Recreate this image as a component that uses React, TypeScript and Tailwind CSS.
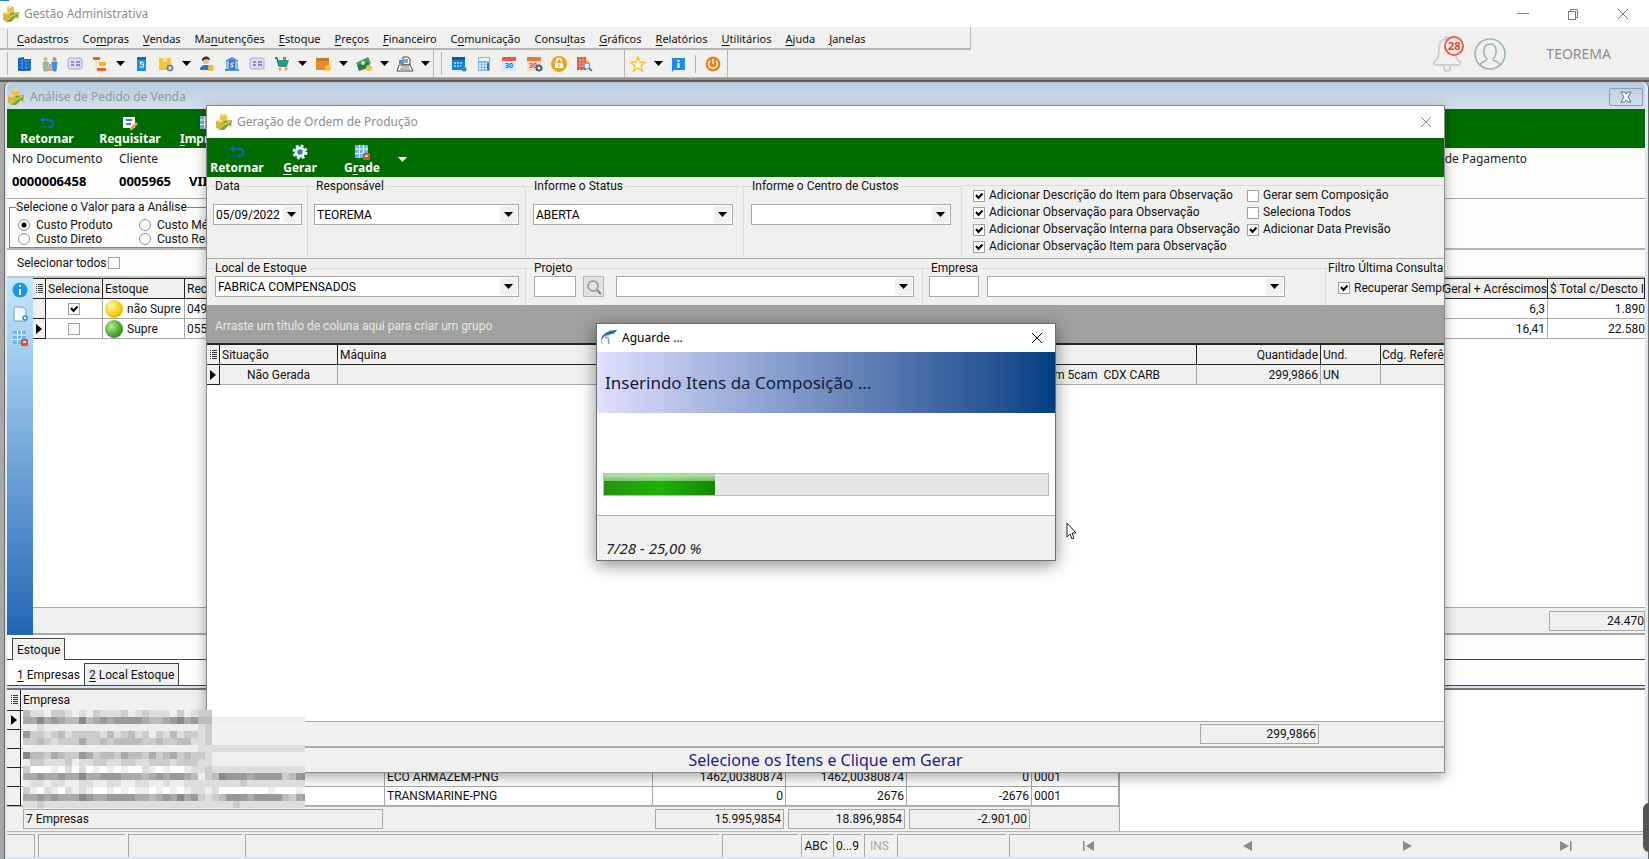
import { useId, type ReactNode } from "react"

const SANS = "font-[Roboto,Arial,sans-serif]"
const UI = "font-['Noto_Sans','Open_Sans',sans-serif]"

interface MnemonicProps {
  text: string
  at: number
}

// Menu caption with its underlined access key
function Mnemonic({ text, at }: MnemonicProps) {
  if (at < 0) return <span>{text}</span>
  return (
    <span className="whitespace-pre">
      {text.slice(0, at)}
      <u className="underline-offset-2">{text[at]}</u>
      {text.slice(at + 1)}
    </span>
  )
}

function AppIcon() {
  return (
    <svg viewBox="0 0 18 18" className="w-[18px] h-[18px] shrink-0">
      <path d="M5 2l4-1 3 1v6l-4 2-3-1z" fill="#e8c34c" />
      <path d="M5 2l4-1 3 1-4 1z" fill="#f8e69a" />
      <path d="M1 8l4-1 4 1v6l-4 2-4-1z" fill="#dfb53c" />
      <path d="M1 8l4-1 4 1-4 1z" fill="#f8e69a" />
      <path d="M3 16l6-6-1-2 9-1-1 7-2-2-5 5-4 0z" fill="#7fa62b" />
      <path d="M4 16l6-5 6-3" stroke="#b8d45c" strokeWidth="1.500" fill="none" />
    </svg>
  )
}

function CloseGlyph({ className = "" }: { className?: string }) {
  return (
    <svg viewBox="0 0 12 12" className={`w-3 h-3 ${className}`} stroke="currentColor" fill="none">
      <path d="M1 1l10 10M11 1L1 11" />
    </svg>
  )
}

function Caret({ className = "" }: { className?: string }) {
  return (
    <svg viewBox="0 0 9 5" className={`w-[9px] h-[5px] ${className}`} fill="currentColor">
      <path d="M0 0h9L4.500 5z" />
    </svg>
  )
}

const ICONS: Record<string, ReactNode> = {
  building: (
    <>
      <path d="M1 2l6-1v2h7v11l-1 1H1z" fill="#1565b8" />
      <path d="M2 5h12M2 8h12M2 11h12M5 3v11M9 4v10" stroke="#3f9cf0" strokeWidth="0.800" />
    </>
  ),
  people: (
    <>
      <circle cx="3.500" cy="3" r="2" fill="#e9b08a" />
      <circle cx="12.500" cy="3" r="2" fill="#c98a5c" />
      <path d="M1 6h5v9H2zM6 7l3 3" fill="#8fb8a4" stroke="#8fb8a4" />
      <path d="M10 6h5l-1 9h-3zM10 8L7 10" fill="#3f8fd6" stroke="#3f8fd6" />
      <rect x="5" y="10" width="5" height="5" fill="#e8a27c" />
    </>
  ),
  card: (
    <>
      <rect x="1" y="2" width="14" height="11" rx="2" fill="#dcdcf6" stroke="#a8a8dc" />
      <path d="M4 6h3M4 9h3M9 6h4M9 9h4" stroke="#6c6cc0" strokeWidth="1.500" />
    </>
  ),
  tree: (
    <>
      <path d="M4 3v10h6M4 7h6" stroke="#d8d8d8" fill="none" />
      <rect x="1" y="1" width="7" height="3" fill="#f0642c" />
      <rect x="7" y="6" width="7" height="4" fill="#f7b516" />
      <rect x="5" y="12" width="9" height="3" fill="#f0642c" />
    </>
  ),
  invoice: (
    <>
      <path d="M4 1h9v14H4z" fill="#1793e6" />
      <path d="M4 1h9v3H4z" fill="#0b6bc0" />
      <path d="M10.500 6h-3v2h3v3h-4" stroke="#fff" fill="none" strokeWidth="1.200" />
    </>
  ),
  package: (
    <>
      <path d="M1 2h12v12H1z" fill="#f4c53a" />
      <path d="M5 2h4v4l-2-1-2 1z" fill="#fbe9ae" />
      <circle cx="12" cy="12" r="3" fill="#8fa3c8" stroke="#5d6f96" />
      <circle cx="12" cy="12" r="1" fill="#fff" />
    </>
  ),
  userCoin: (
    <>
      <circle cx="7" cy="5" r="3" fill="#f3b98a" />
      <path d="M3 5a4 4 0 018-1l-4-1z" fill="#3c2d28" />
      <path d="M1 14c0-4 3-5 6-5s5 2 5 5z" fill="#1976d2" />
      <circle cx="12" cy="12" r="3" fill="#fbb92d" />
    </>
  ),
  bank: (
    <>
      <path d="M1 5l7-4 7 4zM1 13h14v2H1z" fill="#4a8fdc" />
      <path d="M2 5h12v8H2z" fill="#8fbdf0" />
      <rect x="5" y="5" width="6" height="8" fill="#2f74c8" />
      <path d="M10 7H7v2h2v2H6" stroke="#fff" fill="none" />
    </>
  ),
  cart: (
    <>
      <path d="M1 2h2l2 8h8" stroke="#1d6e68" fill="none" strokeWidth="1.500" />
      <path d="M4 4h11l-2 6H5z" fill="#1f9d8c" />
      <path d="M9 1h3v3H9z" fill="#ef5d4a" />
      <circle cx="6" cy="13" r="1.500" fill="#f39a2b" />
      <circle cx="12" cy="13" r="1.500" fill="#f39a2b" />
    </>
  ),
  box: (
    <>
      <path d="M1 2h13v12H1z" fill="#e58a2e" />
      <path d="M1 2h13v3H1z" fill="#d57420" />
      <circle cx="13" cy="12" r="3" fill="#fbc02d" />
    </>
  ),
  money: (
    <>
      <path d="M0 7l12-6 3 6-11 6z" fill="#3fa05a" />
      <path d="M1 9l11-3 3 5-12 4z" fill="#2b7c43" />
      <circle cx="7" cy="7" r="2" fill="#c4ecc8" />
      <circle cx="13" cy="12" r="3" fill="#f7c53a" />
    </>
  ),
  register: (
    <>
      <path d="M6 1h5l2 2v6H6z" fill="#fff" stroke="#444" />
      <path d="M7 4h4M7 6h4" stroke="#444" />
      <rect x="2" y="4" width="4" height="4" fill="#3b98e8" />
      <path d="M0 15l2-6h11l3 6z" fill="#fff" stroke="#444" />
      <path d="M4 11h8M3 13h10" stroke="#777" />
    </>
  ),
  schedule: (
    <>
      <rect x="1" y="1" width="13" height="13" fill="#1580d8" />
      <path d="M1 1h13v3H1z" fill="#0b5aa8" />
      <path d="M3 7h9M3 10h7" stroke="#c6e4ff" strokeWidth="1.500" strokeDasharray="2 1" />
      <circle cx="13" cy="13" r="2.500" fill="#2a8fb0" />
    </>
  ),
  calculator: (
    <>
      <rect x="2" y="1" width="12" height="14" rx="1" fill="#7fb6ea" />
      <rect x="3" y="2" width="10" height="3" fill="#e6f4ff" />
      <path d="M4 7v7M7 7v7M10 7v7" stroke="#e6f4ff" strokeWidth="2" strokeDasharray="1.500 1" />
      <path d="M12 7v7" stroke="#3a70b8" strokeWidth="2" />
    </>
  ),
  calendar: (
    <>
      <rect x="1" y="1" width="14" height="14" rx="1" fill="#d9e9fb" />
      <path d="M1 1h14v4H1z" fill="#ee5a3e" />
      <text x="8" y="12" fontSize="7" fontWeight="700" textAnchor="middle" fill="#1f5fc0">30</text>
    </>
  ),
  calendarGear: (
    <>
      <rect x="1" y="1" width="14" height="14" rx="1" fill="#f7d9c4" />
      <path d="M1 1h14v4H1z" fill="#f0762e" />
      <text x="7" y="12" fontSize="7" fontWeight="700" textAnchor="middle" fill="#d84a2a">30</text>
      <circle cx="13" cy="12" r="2.500" fill="#dfe6ea" stroke="#4f6470" strokeWidth="2" />
    </>
  ),
  lock: (
    <>
      <circle cx="8" cy="8" r="8" fill="#eca51c" />
      <path d="M5.500 7V5a2.500 2.500 0 015 0v2" stroke="#fff" fill="none" strokeWidth="1.400" />
      <rect x="4" y="7" width="8" height="5" fill="#fff" />
      <path d="M8 8v3" stroke="#eca51c" />
    </>
  ),
  gridSearch: (
    <>
      <path d="M1 1h9v13H1z" fill="#e24b3c" />
      <path d="M1 4h9M1 7h9M1 10h9M4 1v13M7 1v13" stroke="#f7b5ac" strokeWidth="0.700" />
      <path d="M10 3l4 3v3h-4z" fill="#fbb72d" />
      <circle cx="11" cy="10" r="3" fill="#d7efff" stroke="#5aa2d8" />
      <path d="M13 12l3 3" stroke="#555" strokeWidth="1.500" />
    </>
  ),
  star: <path d="M8 1l2 5 5 .5-4 3.500 1.500 5L8 12l-4.500 3L5 10 1 6.500 6 6z" fill="#fffbe8" stroke="#fbc02d" strokeWidth="1.400" />,
  info: (
    <>
      <path d="M1 2h13v12H3l-2 2z" fill="#1e88f0" />
      <path d="M7.500 4v2M7.500 7v5" stroke="#fff" strokeWidth="2" />
    </>
  ),
  power: (
    <>
      <circle cx="8" cy="8" r="7.500" fill="#ee8222" />
      <path d="M5 5a4.300 4.300 0 106 0M8 3v5" stroke="#fff" fill="none" strokeWidth="1.400" />
    </>
  ),
  back: (
    <>
      <path d="M2 5h9a3.500 3.500 0 010 7H9" stroke="#1f5fc4" strokeWidth="2" fill="none" />
      <path d="M5 1L1 5l4 4z" fill="#1f5fc4" />
      <path d="M2 12h5" stroke="#1f5fc4" strokeWidth="1.500" strokeDasharray="2 1" />
    </>
  ),
  request: (
    <>
      <path d="M1 2h12v11H1z" fill="#fff" />
      <path d="M4 5h6M4 9h5" stroke="#3d78c8" strokeWidth="2" />
      <path d="M14 7l2 2-6 6H8v-2z" fill="#f2a03c" />
    </>
  ),
  gear: (
    <>
      <circle cx="8" cy="8" r="6" stroke="#e6f4ff" strokeWidth="3" strokeDasharray="2.700 2" fill="none" />
      <circle cx="8" cy="8" r="4" stroke="#e6f4ff" strokeWidth="3" fill="none" />
      <circle cx="8" cy="8" r="2" fill="#2d83d8" />
    </>
  ),
  grid: (
    <>
      <rect x="1" y="1" width="13" height="13" fill="#6fb4ee" />
      <path d="M1 5h13M1 9.500h13M5.500 1v13M9.500 1v13" stroke="#fff" />
      <rect x="9" y="9" width="7" height="7" rx="1" fill="#e2502c" />
      <path d="M11 12h3" stroke="#fff" strokeWidth="1.500" />
    </>
  ),
  page: (
    <>
      <path d="M2 1h9l3 3v11H2z" fill="#f4f8fc" stroke="#8a9cb0" />
      <circle cx="13" cy="12" r="2" fill="#fff" stroke="#2f8ad0" strokeWidth="1.500" />
    </>
  ),
  infoRound: (
    <>
      <circle cx="8" cy="8" r="7.500" fill="#1c94ea" />
      <path d="M8 3v2M8 7v6" stroke="#fff" strokeWidth="2" />
    </>
  ),
  search: (
    <>
      <circle cx="7" cy="7" r="5" fill="#dce8e8" stroke="#8a9696" strokeWidth="1.500" />
      <path d="M11 11l4 4" stroke="#7a8686" strokeWidth="2" />
    </>
  ),
}

function Icon({ name }: { name: string }) {
  return (
    <svg viewBox="0 0 16 16" className="w-4 h-4 shrink-0 overflow-visible">
      {ICONS[name]}
    </svg>
  )
}

function ToolGroup({ items, className = "" }: { items: string[]; className?: string }) {
  return (
    <div className={`flex items-center ${className}`}>
      {items.map((item, index) =>
        item === "v" ? (
          <button key={index} aria-label="Mais opções" className="w-4 flex justify-center text-black">
            <Caret />
          </button>
        ) : item === "|" ? (
          <span key={index} className="w-px h-[18px] mx-1 bg-[#b0b0b0]" />
        ) : (
          <button key={index} aria-label={item} className="w-[25px] flex justify-center">
            <Icon name={item} />
          </button>
        )
      )}
    </div>
  )
}

interface CheckProps {
  label?: string
  name?: string
  checked?: boolean
}

function Check({ label, name, checked = false }: CheckProps) {
  return (
    <label className="flex items-center gap-1 whitespace-nowrap">
      <span className="relative w-3 h-3 shrink-0">
        <input
          type="checkbox"
          aria-label={name}
          defaultChecked={checked}
          className="peer block appearance-none w-3 h-3 border border-[#a0a0a0] bg-white"
        />
        <svg viewBox="0 0 12 12" className="hidden peer-checked:block absolute inset-0 w-3 h-3 pointer-events-none">
          <path d="M3 5l2.500 3L9.500 3.500" stroke="#000" strokeWidth="2" fill="none" />
        </svg>
      </span>
      {label}
    </label>
  )
}

function Radio({ label, checked = false }: CheckProps) {
  return (
    <label className="flex items-center gap-[6px] h-[14px] whitespace-nowrap">
      <input
        type="radio"
        name="valor-analise"
        defaultChecked={checked}
        className="appearance-none w-3 h-3 shrink-0 rounded-full border border-[#909090] bg-white checked:bg-[radial-gradient(circle,#000_0_2px,#fff_3px)]"
      />
      {label}
    </label>
  )
}

interface ComboProps {
  id?: string
  value?: string
  name?: string
  className?: string
}

function Combo({ id, value = "", name, className = "" }: ComboProps) {
  return (
    <div className={`relative h-[21px] ${className}`}>
      <select
        id={id}
        aria-label={name}
        defaultValue={value}
        className="block appearance-none w-full h-full pl-[2px] border border-[#a8a8a8] bg-white text-black"
      >
        <option>{value}</option>
      </select>
      <span className="absolute right-[2px] top-[2px] bottom-[2px] w-[17px] bg-[#f0f0ee] flex items-center justify-center text-black pointer-events-none">
        <Caret />
      </span>
    </div>
  )
}

interface PanelProps {
  label: string
  children: (id: string) => ReactNode
  className?: string
}

function Panel({ label, children, className = "" }: PanelProps) {
  const id = useId()
  return (
    <fieldset className={`min-w-0 border-t border-r border-[#dadada] ${className}`}>
      <legend className="ml-2 h-4 leading-4 pr-[2px] whitespace-nowrap">
        <label htmlFor={id}>{label}</label>
      </legend>
      {children(id)}
    </fieldset>
  )
}

function GridMark() {
  return (
    <svg viewBox="0 0 8 12" className="w-2 h-3 mx-auto" stroke="#333">
      <path d="M1 1.500h1M3 1.500h5M1 3.500h1M3 3.500h5M1 5.500h1M3 5.500h5M1 7.500h1M3 7.500h5M1 9.500h1M3 9.500h5" />
    </svg>
  )
}

function RowMark() {
  return (
    <svg viewBox="0 0 6 10" className="w-[6px] h-[10px] mx-auto">
      <path d="M0 0l6 5-6 5z" />
    </svg>
  )
}

const MENU: [string, number][] = [
  ["Cadastros", 0],
  ["Compras", 2],
  ["Vendas", 0],
  ["Manutenções", 2],
  ["Estoque", 0],
  ["Preços", 0],
  ["Financeiro", 0],
  ["Comunicação", 1],
  ["Consultas", 5],
  ["Gráficos", 0],
  ["Relatórios", 0],
  ["Utilitários", 0],
  ["Ajuda", 0],
  ["Janelas", 0],
]

// Grey levels of the redacted block, one hex digit per cell
const REDACTED = [
  "bddeccdedecdddcedcdddecedcc..............",
  "aa8a9abb8ba9a9999abba98a9bbeeeeeeeeeeeeee",
  "eedeeeeeeeeeeeeeeeeeeeeeedc..............",
  "9ccdcbdccccdbdcbdcecdbdccdc..............",
  "ccbcdcccaccbcbbbbccbccbbddc..............",
  "eeeeeeeeeeeeeeeeeeeeeeeeedddddddddddddddd",
  "8bbcabcc9acbbcabbcacbacbccd..............",
  "eccdddceddccddccddcccdcccdd..............",
  "cfffefdfdfefefeffdefeffeddcdddddddddddddd",
  "aa9aa9aa8aa999aaaba9a99abecb8999a9999cb98",
  "eddeddeeddeeddeeddeedeeddddddddcddddddddd",
  "cefdefdedeffefefeefefefeddedfffffffefffef",
  "aa9a9aaa89aa9999aaba9a8a9cdcb999a9999bca9",
  "ddcdddddddddddddddddddddddddddcdddddddddd",
]

function Redacted() {
  return (
    <svg viewBox="0 0 282 98" shapeRendering="crispEdges" className="absolute left-[23px] top-[710px] w-[282px] h-[98px]">
      {REDACTED.map((row, y) =>
        [...row].map((level, x) =>
          level === "." ? null : <rect key={`${x}-${y}`} x={x * 7} y={y * 7} width="7" height="7" fill={`#${level.repeat(6)}`} />
        )
      )}
    </svg>
  )
}

function GreenButton({ icon, text, at, className = "" }: MnemonicProps & { icon: string; className?: string }) {
  return (
    <button className={`flex flex-col items-center justify-center pt-1 text-white ${className}`}>
      <Icon name={icon} />
      <span className="text-xs leading-4 font-bold">
        <Mnemonic text={text} at={at} />
      </span>
    </button>
  )
}

function Header() {
  return (
    <header className={`${UI} shrink-0`}>
      <div className="h-[27px] flex items-center bg-white pl-[2px]">
        <AppIcon />
        <h1 className="ml-1 text-xs text-[#8c8c8c] grow">Gestão Administrativa</h1>
        <div className="flex items-center gap-[38px] mr-5 text-[#777]">
          <button aria-label="Minimizar" className="w-3 h-px bg-[#888]" />
          <button aria-label="Restaurar">
            <svg viewBox="0 0 12 12" className="w-3 h-3" fill="none" stroke="currentColor">
              <path d="M1.500 3.500h7v8h-7zM3.500 3.500v-2h7v8h-2" />
            </svg>
          </button>
          <button aria-label="Fechar">
            <CloseGlyph />
          </button>
        </div>
      </div>

      <div className="h-[50px] flex bg-[#f0f0ee]">
        <div>
          <nav className="h-[23px] w-[971px] flex items-center pl-[7px] pt-[2px] border-r border-b-2 border-[#b4b4b2] text-[11px] leading-4 text-[#111]">
            <span className="w-px h-[19px] mr-[2px] bg-[#b8b8b6]" />
            {MENU.map(([text, at]) => (
              <button key={text} className="px-[7px]">
                <Mnemonic text={text} at={at} />
              </button>
            ))}
          </nav>
          <div className="h-[27px] w-[728px] flex border-r border-[#b4b4b2]">
            <span className="w-px h-[23px] my-[2px] ml-[7px] mr-1 bg-[#b8b8b6]" />
            <ToolGroup
              items={["building", "people", "card", "tree", "v", "invoice", "package", "v", "userCoin", "bank", "card"]}
            />
            <ToolGroup
              items={["cart", "v", "box", "v", "money", "v", "register", "v"]}
              className="border-r border-[#b4b4b2]"
            />
            <span className="w-px h-[23px] my-[2px] ml-[7px] mr-1 bg-[#b8b8b6]" />
            <ToolGroup
              items={["schedule", "calculator", "calendar", "calendarGear", "lock", "gridSearch"]}
              className="grow border-r border-[#b4b4b2]"
            />
            <ToolGroup items={["star", "v", "info", "|", "power"]} className="pr-[2px]" />
          </div>
        </div>

        <div className="ml-auto flex items-center pt-1 pr-[38px]">
          <button aria-label="Notificações" className="relative mr-3">
            <svg viewBox="0 0 30 36" className="w-[30px] h-9" fill="none" stroke="#cfcfcf" strokeWidth="2">
              <path d="M15 3c6 0 8 5 8 10 0 7 1 10 5 13 1 2 0 3-2 3H4c-2 0-3-1-2-3 4-3 5-6 5-13C7 8 9 3 15 3zM12 29v3a3 3 0 006 0v-3M13 3a2 2 0 014 0" />
            </svg>
            <span className="absolute left-3 top-0 w-5 h-5 rounded-full border-2 border-[#ef5a48] bg-[#f6f0ee] text-[11px] leading-4 font-bold text-[#e8402c] text-center">
              28
            </span>
          </button>
          <button aria-label="Perfil" className="mr-10">
            <svg viewBox="0 0 32 32" className="w-8 h-8" fill="none" stroke="#9fb4b4" strokeWidth="1.600">
              <circle cx="16" cy="16" r="15" />
              <path d="M6 27c1-4 7-3 7-6-5-5-4-15 3-15s8 10 3 15c0 3 6 2 7 6" />
            </svg>
          </button>
          <span className="text-sm text-[#8c8c8c]">TEOREMA</span>
        </div>
      </div>
    </header>
  )
}

const UPPER_ROWS = [
  { checked: true, status: "não Supre", color: "bg-[radial-gradient(circle_at_35%_35%,#fff6b0,#f7c600_60%,#c89800)]", code: "049", total: "6,3", net: "1.890", current: false },
  { checked: false, status: "Supre", color: "bg-[radial-gradient(circle_at_35%_35%,#b8ec98,#3fa020_60%,#2a7412)]", code: "055", total: "16,41", net: "22.580", current: true },
]

function UpperGrid() {
  const head = "h-5 border-r border-b border-[#222] bg-[#f0f0ee] font-normal text-left px-[2px] overflow-hidden whitespace-nowrap"
  const cell = "h-5 border-r border-b border-[#a8a8a8] px-[2px] overflow-hidden whitespace-nowrap"
  return (
    <table className="w-full table-fixed border-separate border-spacing-0 border-t border-[#222] bg-white">
      <colgroup>
        <col className="w-[13px]" />
        <col className="w-[57px]" />
        <col className="w-[82px]" />
        <col className="w-[100px]" />
        <col />
        <col className="w-[120px]" />
        <col className="w-[97px]" />
      </colgroup>
      <thead>
        <tr>
          <th className="border-r border-b border-[#222] bg-[#f0f0ee]"><GridMark /></th>
          <th className={head}>Seleciona</th>
          <th className={head}>Estoque</th>
          <th className={head}>Rec</th>
          <th className={head} />
          <th className="h-5 border-r border-b border-[#222] bg-[#f0f0ee] font-normal text-right whitespace-nowrap">Geral + Acréscimos</th>
          <th className={head}>$ Total c/Descto I</th>
        </tr>
      </thead>
      <tbody>
        {UPPER_ROWS.map((row) => (
          <tr key={row.code}>
            <td className="border-r border-b border-[#222] bg-[#f0f0ee]">{row.current && <RowMark />}</td>
            <td className={cell}>
              <div className="flex justify-center"><Check name={`Seleciona ${row.code}`} checked={row.checked} /></div>
            </td>
            <td className={cell}>
              <div className="flex items-center gap-1">
                <span className={`w-[18px] h-[18px] shrink-0 rounded-full ${row.color}`} />
                {row.status}
              </div>
            </td>
            <td className={cell}>{row.code}</td>
            <td className={cell} />
            <td className={`${cell} text-right`}>{row.total}</td>
            <td className="h-5 border-b border-[#a8a8a8] text-right">{row.net}</td>
          </tr>
        ))}
      </tbody>
    </table>
  )
}

const LOWER_ROWS = [
  ["", "", "", "", ""],
  ["", "", "", "", ""],
  ["", "", "", "", ""],
  ["ECO ARMAZEM-PNG", "1462,00380874", "1462,00380874", "0", "0001"],
  ["TRANSMARINE-PNG", "0", "2676", "-2676", "0001"],
]

function LowerGrid() {
  const cell = "h-[19px] border-r border-b border-[#a8a8a8] px-[2px] whitespace-nowrap"
  const total = "h-5 px-[2px] border border-[#a8a8a8] flex items-center"
  return (
    <div className="w-[1113px] border-r border-[#a8a8a8]">
      <table className="w-full table-fixed border-separate border-spacing-0 bg-white">
        <colgroup>
          <col className="w-[14px]" />
          <col />
          <col className="w-[268px]" />
          <col className="w-[133px]" />
          <col className="w-[121px]" />
          <col className="w-[125px]" />
          <col className="w-[87px]" />
        </colgroup>
        <thead>
          <tr>
            <th className="border-r border-b border-[#222] bg-[#f0f0ee]"><GridMark /></th>
            <th colSpan={6} className="h-[21px] border-b border-[#222] bg-[#f0f0ee] font-normal text-left px-[2px]">Empresa</th>
          </tr>
        </thead>
        <tbody>
          {LOWER_ROWS.map((row, index) => (
            <tr key={index}>
              <td className="border-r border-b border-[#222] bg-[#f0f0ee]">{index === 0 && <RowMark />}</td>
              <td className={cell} />
              <td className={cell}>{row[0]}</td>
              <td className={`${cell} text-right`}>{row[1]}</td>
              <td className={`${cell} text-right`}>{row[2]}</td>
              <td className={`${cell} text-right`}>{row[3]}</td>
              <td className={cell}>{row[4]}</td>
            </tr>
          ))}
        </tbody>
      </table>
      <div className="h-[25px] pl-4 flex items-center gap-1 bg-[#f0f0ee] border-t border-[#b4b4b2]">
        <div className={`${total} w-[360px] mr-[268px]`}>7 Empresas</div>
        <div className={`${total} w-[129px] justify-end`}>15.995,9854</div>
        <div className={`${total} w-[117px] justify-end`}>18.896,9854</div>
        <div className={`${total} w-[121px] justify-end`}>-2.901,00</div>
      </div>
    </div>
  )
}

function StatusBar() {
  const cell = "h-[23px] flex items-center justify-center border-l border-t border-[#a8a8a8]"
  const nav = "w-3 h-[10px]"
  return (
    <footer className="flex h-[26px] pt-[2px] gap-[3px] bg-[#f0f0ee] border-t border-[#b4b4b2]">
      <span className="w-[28px] h-[23px] border-r border-t border-[#a8a8a8]" />
      <span className={`${cell} w-[87px]`} />
      <span className={`${cell} w-[114px]`} />
      <span className={`${cell} w-[474px]`} />
      <span className={`${cell} w-[76px]`} />
      <span className={`${cell} w-[29px]`}>ABC</span>
      <span className={`${cell} w-[28px]`}>0...9</span>
      <span className={`${cell} w-[30px] text-[#a8a8a8]`}>INS</span>
      <span className={`${cell} w-[109px]`} />
      <div className="grow h-[23px] flex items-center justify-around border-l border-t border-[#a8a8a8] text-[#8a8a8a]">
        <button aria-label="Primeiro">
          <svg viewBox="0 0 12 10" className={nav} fill="currentColor"><path d="M0 0h1.500v10H0zM11 0v10L3 5z" /></svg>
        </button>
        <button aria-label="Anterior">
          <svg viewBox="0 0 12 10" className={nav} fill="currentColor"><path d="M10 0v10L1 5z" /></svg>
        </button>
        <button aria-label="Próximo">
          <svg viewBox="0 0 12 10" className={nav} fill="currentColor"><path d="M2 0v10l9-5z" /></svg>
        </button>
        <button aria-label="Último">
          <svg viewBox="0 0 12 10" className={nav} fill="currentColor"><path d="M0 0v10l9-5zM10 0h1.500v10H10z" /></svg>
        </button>
      </div>
    </footer>
  )
}

function OrderAnalysis() {
  return (
    <section className="grow min-h-0 flex flex-col ml-1 rounded-t-md border-l border-r border-[#6a6a6a] bg-[#dbe7f2] pl-[2px] pr-[3px]">
      <div className={`${UI} h-[27px] shrink-0 flex items-center rounded-t-md bg-linear-to-b from-[#b9cbdc] to-[#d3e1ed] pt-[2px] pr-[2px]`}>
        <AppIcon />
        <h2 className="ml-[5px] text-xs text-[#8e979f] grow">Análise de Pedido de Venda</h2>
        <button aria-label="Fechar janela" className="w-[34px] h-[18px] flex items-center justify-center rounded-xs border border-[#8a9cb0] text-[#5a6a7a]">
          <svg viewBox="0 0 12 12" className="w-3 h-3" fill="#fff" stroke="currentColor">
            <path d="M1 1h3.500L6 3l1.500-2H11L8 6l3 5H7.500L6 9l-1.500 2H1l3-5z" />
          </svg>
        </button>
      </div>

      <div className={`${UI} h-[39px] shrink-0 flex bg-[#006c00]`}>
        <GreenButton icon="back" text="Retornar" at={-1} className="w-20" />
        <GreenButton icon="request" text="Requisitar" at={2} className="w-[86px]" />
        <GreenButton icon="grid" text="Imprimir" at={0} className="ml-[7px]" />
      </div>

      <div className={`${UI} h-[51px] shrink-0 bg-[#fdfdfc] border-b border-[#a8a8a8] flex pl-[5px] pt-[3px] text-xs leading-4 text-[#222]`}>
        <div className="w-[107px]">
          <p>Nro Documento</p>
          <p className="mt-[6px] text-[13px] leading-4 font-bold text-black">0000006458</p>
        </div>
        <div className="w-[70px]">
          <p>Cliente</p>
          <p className="mt-[6px] text-[13px] leading-4 font-bold text-black">0005965</p>
        </div>
        <p className="mt-[22px] text-[13px] leading-4 font-bold text-black">VII</p>
        <p className="ml-auto mr-[118px]">de Pagamento</p>
      </div>

      <div className="h-[51px] shrink-0 bg-[#fdfdfc] border-b-2 border-[#b4b4b2] pl-[2px]">
        <fieldset className="h-[49px] w-[340px] border border-[#3d94dc] pl-2">
          <legend className="-ml-[2px] h-4 leading-4">Selecione o Valor para a Análise</legend>
          <div className="grid grid-cols-[121px_1fr] pt-[3px]">
            <Radio label="Custo Produto" checked />
            <Radio label="Custo Médio" />
            <Radio label="Custo Direto" />
            <Radio label="Custo Real" />
          </div>
        </fieldset>
      </div>

      <div className="h-[28px] shrink-0 bg-[#fdfdfc] border-b-2 border-[#c4c4c2] pl-[10px] flex items-center gap-[2px]">
        <label htmlFor="todos">Selecionar todos</label>
        <input id="todos" type="checkbox" className="appearance-none w-3 h-3 border border-[#a0a0a0] bg-white" />
      </div>

      <div className="grow min-h-0 flex">
        <div className="w-[26px] shrink-0 pt-1 flex flex-col items-center gap-2 bg-linear-to-b from-[#c4e9fd] to-[#1f66b4]">
          <button aria-label="Informações"><Icon name="infoRound" /></button>
          <button aria-label="Novo documento"><Icon name="page" /></button>
          <button aria-label="Grade"><Icon name="grid" /></button>
        </div>
        <div className="grow min-w-0 flex flex-col bg-white overflow-hidden">
          <UpperGrid />
          <div className="mt-auto h-[28px] flex justify-end items-center bg-[#f0f0ee] border-t border-b-2 border-[#a8a8a8]">
            <span className="w-[96px] h-5 border border-[#a8a8a8] flex items-center justify-end">24.470</span>
          </div>
        </div>
      </div>

      <div className="h-[25px] shrink-0 bg-[#fdfdfc] border-b border-[#444] pt-[3px] pl-[5px]">
        <button className="h-[22px] px-1 border border-b-0 border-[#444] bg-[#f0f0ee]">Estoque</button>
      </div>
      <div className="h-[26px] shrink-0 bg-[#fdfdfc] border-b border-[#444] flex items-end pl-[6px]">
        <button className="h-[22px] px-1 pt-px"><Mnemonic text="1 Empresas" at={0} /></button>
        <button className="h-[22px] px-1 border border-b-0 border-[#444] bg-[#f0f0ee]"><Mnemonic text="2 Local Estoque" at={0} /></button>
      </div>
      <div className="shrink-0 mt-[2px] bg-white border-t-2 border-[#777]">
        <LowerGrid />
      </div>
      <StatusBar />
      <div className="h-[2px] shrink-0" />
    </section>
  )
}

function ProductionOrder() {
  const head = "h-5 border-r border-b border-[#222] font-normal text-left px-[2px] overflow-hidden whitespace-nowrap"
  const cell = "h-5 border-r border-b border-[#a8a8a8] px-[2px] overflow-hidden whitespace-nowrap"
  return (
    <section className="absolute left-[206px] right-[204px] top-[105px] bottom-[86px] flex flex-col border border-[#8a8a8a] bg-[#f0f0ee] shadow-[0_4px_12px_rgba(0,0,0,0.35)]">
      <div className={`${UI} h-8 shrink-0 flex items-center bg-white pl-2 pr-3`}>
        <AppIcon />
        <h2 className="ml-1 text-xs text-[#8c8c8c] grow">Geração de Ordem de Produção</h2>
        <button aria-label="Fechar ordem" className="text-[#8c8c8c]"><CloseGlyph /></button>
      </div>

      <div className={`${UI} h-[39px] shrink-0 flex bg-[#006c00]`}>
        <GreenButton icon="back" text="Retornar" at={-1} className="w-[60px]" />
        <GreenButton icon="gear" text="Gerar" at={0} className="w-[66px]" />
        <GreenButton icon="grid" text="Grade" at={1} className="w-[58px]" />
        <button aria-label="Opções da grade" className="w-[22px] pt-1 flex items-center justify-center text-white">
          <Caret />
        </button>
      </div>

      <div className="h-[82px] shrink-0 grid grid-cols-[101px_218px_218px_218px_1fr] pt-px pb-[2px] border-b border-[#a8a8a8]">
        <Panel label="Data">{(id) => <Combo id={id} value="05/09/2022" className="mt-[10px] ml-[6px] mr-[5px]" />}</Panel>
        <Panel label="Responsável">{(id) => <Combo id={id} value="TEOREMA" className="mt-[10px] mx-[6px]" />}</Panel>
        <Panel label="Informe o Status">{(id) => <Combo id={id} value="ABERTA" className="mt-[10px] ml-[7px] mr-[10px]" />}</Panel>
        <Panel label="Informe o Centro de Custos">{(id) => <Combo id={id} className="mt-[10px] ml-[7px] mr-[10px]" />}</Panel>
        <div className="mt-[7px] pl-[11px] pt-px border-t border-[#dadada] flex gap-4">
          <div className="w-[258px] flex flex-col leading-[17px]">
            <Check label="Adicionar Descrição do Item para Observação" checked />
            <Check label="Adicionar Observação para Observação" checked />
            <Check label="Adicionar Observação Interna para Observação" checked />
            <Check label="Adicionar Observação Item para Observação" checked />
          </div>
          <div className="flex flex-col leading-[17px]">
            <Check label="Gerar sem Composição" />
            <Check label="Seleciona Todos" />
            <Check label="Adicionar Data Previsão" checked />
          </div>
        </div>
      </div>

      <div className="h-[46px] shrink-0 pt-px grid grid-cols-[319px_397px_403px_1fr]">
        <Panel label="Local de Estoque">{(id) => <Combo id={id} value="FABRICA COMPENSADOS" className="ml-2 mr-[6px]" />}</Panel>
        <Panel label="Projeto">
          {(id) => (
            <div className="flex ml-2 mr-2">
              <input id={id} className="w-[42px] h-[21px] px-[2px] border border-[#a8a8a8] bg-white" />
              <button aria-label="Pesquisar projeto" className="ml-[7px] w-[21px] h-[21px] flex items-center justify-center border border-[#b4b4b2] bg-[#e2e2e0]">
                <Icon name="search" />
              </button>
              <Combo name="Nome do projeto" className="ml-3 grow" />
            </div>
          )}
        </Panel>
        <Panel label="Empresa">
          {(id) => (
            <div className="flex ml-[6px] mr-10">
              <input id={id} className="w-[50px] h-[21px] px-[2px] border border-[#a8a8a8] bg-white" />
              <Combo name="Nome da empresa" className="ml-2 grow" />
            </div>
          )}
        </Panel>
        <fieldset className="min-w-0 border-t border-[#dadada]">
          <legend className="ml-[2px] h-4 leading-4 whitespace-nowrap">Filtro Última Consulta</legend>
          <div className="ml-3 pt-1">
            <Check label="Recuperar Sempr" checked />
          </div>
        </fieldset>
      </div>

      <div className="h-[38px] shrink-0 flex items-center pl-2 pt-1 bg-[#a0a09e] text-[#e8e8e6]">
        Arraste um título de coluna aqui para criar um grupo
      </div>

      <div className="grow min-h-0 bg-white">
        <table className="w-full table-fixed border-separate border-spacing-0 border-t-2 border-[#222] bg-[#f0f0ee]">
          <colgroup>
            <col className="w-[13px]" />
            <col className="w-[118px]" />
            <col className="w-[500px]" />
            <col />
            <col className="w-[124px]" />
            <col className="w-[60px]" />
            <col className="w-[63px]" />
          </colgroup>
          <thead>
            <tr>
              <th className="border-r border-b border-[#222]"><GridMark /></th>
              <th className={head}>Situação</th>
              <th className={head}>Máquina</th>
              <th className={head} />
              <th className={`${head} text-right`}>Quantidade</th>
              <th className={head}>Und.</th>
              <th className="h-5 border-b border-[#222] font-normal text-left pl-px whitespace-nowrap">Cdg. Referê</th>
            </tr>
          </thead>
          <tbody>
            <tr>
              <td className="border-r border-b border-[#222]"><RowMark /></td>
              <td className={`${cell} text-center`}>Não Gerada</td>
              <td className={cell} />
              <td className={`${cell} whitespace-pre`}><span className="ml-[214px]">m 5cam  CDX CARB</span></td>
              <td className={`${cell} text-right`}>299,9866</td>
              <td className={cell}>UN</td>
              <td className="h-5 border-b border-[#a8a8a8]" />
            </tr>
          </tbody>
        </table>
      </div>

      <div className="h-[27px] shrink-0 flex items-center justify-end pr-[125px] border-t border-b-2 border-[#a8a8a8]">
        <span className="w-[119px] h-5 pr-[2px] border border-[#a8a8a8] flex items-center justify-end">299,9866</span>
      </div>
      <p className={`${UI} h-6 shrink-0 text-center text-base leading-6 text-[#1c1c8c]`}>
        Selecione os Itens e Clique em Gerar
      </p>
    </section>
  )
}

function ProgressDialog({ current, total }: { current: number; total: number }) {
  const percent = (current / total) * 100
  return (
    <section className={`${UI} absolute left-[596px] top-[323px] w-[460px] border border-[#6e6e6e] bg-white shadow-[0_4px_16px_rgba(0,0,0,0.45)]`}>
      <div className="h-7 flex items-center pl-[3px] pr-3 text-black">
        <svg viewBox="0 0 18 18" className="w-[18px] h-[18px]">
          <path d="M1 13C0 7 6 1 17 1c-2 4-5 4-9 5C4 7 2 9 1 13z" fill="#2a6f9e" />
          <path d="M2 15c-2-5 2-9 8-9" stroke="#9db4cc" fill="none" />
          <path d="M5 8.500l3 0 1 6.500" stroke="#8c9fc0" strokeWidth="1.500" fill="none" />
        </svg>
        <h3 className="ml-1 text-xs grow">Aguarde ...</h3>
        <button aria-label="Fechar progresso"><CloseGlyph /></button>
      </div>
      <div className="h-[61px] pl-2 flex items-center bg-linear-to-r from-[#e0e0ff] to-[#003f82] text-[17px] text-[#10203c]">
        Inserindo Itens da Composição ...
      </div>
      <div className="h-[103px] pt-[60px] px-[6px] border-b border-[#b4b4b2]">
        <div role="progressbar" aria-valuenow={percent} className="h-[23px] border border-[#bcbcbc] bg-[#e6e6e4]">
          <div
            className="h-full flex flex-col bg-linear-to-r from-[#259010] via-[#1cb400] to-[#148800]"
            style={{ width: `${percent}%` }}
          >
            <span className="h-[7px] bg-linear-to-b from-white/70 to-white/40" />
          </div>
        </div>
      </div>
      <div className="h-11 flex items-end pl-[9px] pb-[2px] bg-[#f0f0ee] text-[15px] leading-5 italic text-[#222]">
        {current}/{total} - {percent.toFixed(2).replace(".", ",")} %
      </div>
    </section>
  )
}

export default function App() {
  return (
    <main className={`${SANS} relative h-screen flex flex-col overflow-hidden bg-[#a8a8a6] text-xs leading-4 text-[#111]`}>
      <Header />
      <div className="h-[5px] shrink-0 border-t border-b-2 border-t-[#b4b4b2] border-b-[#5c5c5a] bg-[#90908e]" />
      <OrderAnalysis />
      <ProductionOrder />
      <Redacted />
      <ProgressDialog current={7} total={28} />

      {/* Mouse pointer */}
      <svg viewBox="0 0 12 18" className="absolute left-[1066px] top-[522px] w-3 h-[18px]">
        <path d="M1 1v14l3-3 2 5 2-1-2-5h4z" fill="#fff" stroke="#222" />
      </svg>
      <span className="absolute left-0 top-0 w-[9px] h-px bg-[#1a7fd8]" />
      <span className="absolute right-0 top-[803px] w-[6px] h-[49px] rounded-l-md bg-[#555]" />
    </main>
  )
}
